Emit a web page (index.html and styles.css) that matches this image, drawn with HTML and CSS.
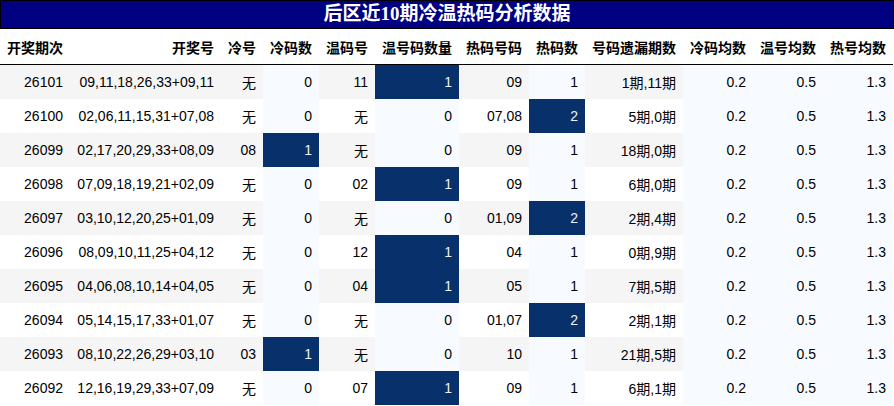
FILE: index.html
```html
<!DOCTYPE html>
<html lang="zh">
<head>
<meta charset="utf-8">
<title>后区近10期冷温热码分析数据</title>
<link rel="stylesheet" href="styles.css">
</head>
<body>
<div class="report">
  <div class="title">后区近10期冷温热码分析数据</div>
  <table class="grid">
    <colgroup>
      <col class="w70"><col class="w151"><col class="w42"><col class="w56"><col class="w56"><col class="w84"><col class="w70"><col class="w56"><col class="w98"><col class="w70"><col class="w70"><col class="w70">
    </colgroup>
    <thead>
      <tr><th>开奖期次</th><th>开奖号</th><th>冷号</th><th>冷码数</th><th>温码号</th><th>温号码数量</th><th>热码号码</th><th>热码数</th><th>号码遗漏期数</th><th>冷码均数</th><th>温号均数</th><th>热号均数</th></tr>
    </thead>
    <tbody>
      <tr><td>26101</td><td>09,11,18,26,33+09,11</td><td>无</td><td class="lo">0</td><td>11</td><td class="hi">1</td><td>09</td><td class="lo">1</td><td>1期,11期</td><td class="lo">0.2</td><td class="lo">0.5</td><td class="lo">1.3</td></tr>
      <tr><td>26100</td><td>02,06,11,15,31+07,08</td><td>无</td><td class="lo">0</td><td>无</td><td class="lo">0</td><td>07,08</td><td class="hi">2</td><td>5期,0期</td><td class="lo">0.2</td><td class="lo">0.5</td><td class="lo">1.3</td></tr>
      <tr><td>26099</td><td>02,17,20,29,33+08,09</td><td>08</td><td class="hi">1</td><td>无</td><td class="lo">0</td><td>09</td><td class="lo">1</td><td>18期,0期</td><td class="lo">0.2</td><td class="lo">0.5</td><td class="lo">1.3</td></tr>
      <tr><td>26098</td><td>07,09,18,19,21+02,09</td><td>无</td><td class="lo">0</td><td>02</td><td class="hi">1</td><td>09</td><td class="lo">1</td><td>6期,0期</td><td class="lo">0.2</td><td class="lo">0.5</td><td class="lo">1.3</td></tr>
      <tr><td>26097</td><td>03,10,12,20,25+01,09</td><td>无</td><td class="lo">0</td><td>无</td><td class="lo">0</td><td>01,09</td><td class="hi">2</td><td>2期,4期</td><td class="lo">0.2</td><td class="lo">0.5</td><td class="lo">1.3</td></tr>
      <tr><td>26096</td><td>08,09,10,11,25+04,12</td><td>无</td><td class="lo">0</td><td>12</td><td class="hi">1</td><td>04</td><td class="lo">1</td><td>0期,9期</td><td class="lo">0.2</td><td class="lo">0.5</td><td class="lo">1.3</td></tr>
      <tr><td>26095</td><td>04,06,08,10,14+04,05</td><td>无</td><td class="lo">0</td><td>04</td><td class="hi">1</td><td>05</td><td class="lo">1</td><td>7期,5期</td><td class="lo">0.2</td><td class="lo">0.5</td><td class="lo">1.3</td></tr>
      <tr><td>26094</td><td>05,14,15,17,33+01,07</td><td>无</td><td class="lo">0</td><td>无</td><td class="lo">0</td><td>01,07</td><td class="hi">2</td><td>2期,1期</td><td class="lo">0.2</td><td class="lo">0.5</td><td class="lo">1.3</td></tr>
      <tr><td>26093</td><td>08,10,22,26,29+03,10</td><td>03</td><td class="hi">1</td><td>无</td><td class="lo">0</td><td>10</td><td class="lo">1</td><td>21期,5期</td><td class="lo">0.2</td><td class="lo">0.5</td><td class="lo">1.3</td></tr>
      <tr><td>26092</td><td>12,16,19,29,33+07,09</td><td>无</td><td class="lo">0</td><td>07</td><td class="hi">1</td><td>09</td><td class="lo">1</td><td>6期,1期</td><td class="lo">0.2</td><td class="lo">0.5</td><td class="lo">1.3</td></tr>
    </tbody>
  </table>
</div>
</body>
</html>
```
FILE: styles.css
```css
html, body {
  margin: 0;
  padding: 0;
  background: #ffffff;
}
.report {
  width: 894px;
}
.title {
  box-sizing: border-box;
  height: 29px;
  border: 1px solid #000000;
  background: #000080;
  color: #ffffff;
  font-family: "Liberation Serif", "Noto Sans CJK SC", serif;
  font-weight: bold;
  font-size: 19px;
  line-height: 26px;
  text-align: center;
}
.grid {
  border-collapse: collapse;
  table-layout: fixed;
  width: 893px;
  font-family: "Liberation Sans", "Noto Sans CJK SC", sans-serif;
  font-size: 14px;
  color: #000000;
}
.w70 { width: 70px; }
.w151 { width: 151px; }
.w42 { width: 42px; }
.w56 { width: 56px; }
.w84 { width: 84px; }
.w98 { width: 98px; }
.grid th,
.grid td {
  padding: 0 7px;
  text-align: right;
  white-space: nowrap;
  overflow: hidden;
}
.grid th {
  height: 35px;
  font-weight: bold;
  border-bottom: 1px solid #000000;
}
.grid td {
  height: 34px;
}
.grid tbody tr:nth-child(odd) {
  background: #f5f5f5;
}
.grid td.lo {
  background: #f7fbff;
}
.grid td.hi {
  background: #08306b;
  color: #f1f1f1;
}
```
